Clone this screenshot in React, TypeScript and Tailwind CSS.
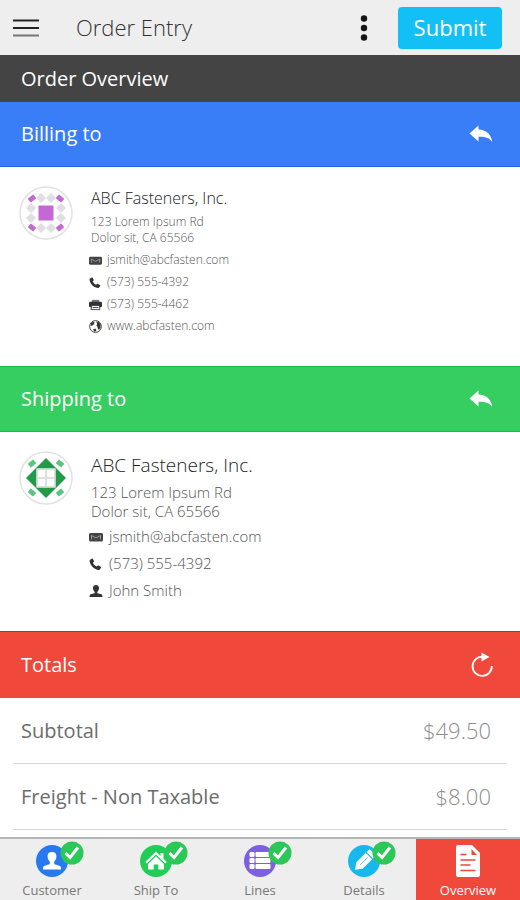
import React from 'react';

interface ContactLine {
  icon: React.ReactNode;
  text: string;
  href?: string;
}

interface ContactProps {
  avatar: React.ReactNode;
  name: string;
  address: string[];
  lines: ContactLine[];
  large?: boolean;
}

const MailIcon = () => (
  <svg viewBox="0 0 14 14" className="w-full h-full" fill="none">
    <rect x="0" y="3" width="14" height="8.5" rx="1.5" fill="#444" />
    <path d="M2.5 9.3V5.4L7 8l4.500-2.600v3.900" stroke="#a8a8a8" strokeWidth="0.9" />
  </svg>
);

const PhoneIcon = () => (
  <svg viewBox="0 0 14 14" className="w-full h-full" fill="#333">
    <path d="M1.200 2.800 3 1.600c.5-.2.8 0 1 .4l1 2c.2.500 0 .8-.3 1.100l-.8.6c.7 1.700 2 3 3.700 3.800l1-.8c.3-.3.7-.4 1.100-.2l2 1.200c.5.300.6.700.3 1.100l-1.200 1.600c-.4.500-.9.700-1.500.6C4.700 12.100 1.300 8.600.6 4.100c-.1-.6.1-1 .6-1.300z" />
  </svg>
);

const PrinterIcon = () => (
  <svg viewBox="0 0 14 14" className="w-full h-full">
    <path d="M3 2h8v2.500H3z" fill="#777" />
    <rect x="0" y="4" width="14" height="6" rx="1.500" fill="#333" />
    <path d="M3 8h8l.8 4.500H2.200z" fill="#fff" stroke="#333" strokeWidth="0.9" />
    <path d="M4 10.300h6" stroke="#333" strokeWidth="1" />
  </svg>
);

const GlobeIcon = () => (
  <svg viewBox="0 0 14 14" className="w-full h-full">
    <circle cx="7" cy="7" r="6.300" fill="#fff" stroke="#333" strokeWidth="1" />
    <path d="M2 3.500 4.500 1.800l1.500.8-.7 1.700-1.500 1.500-2 .5z" fill="#333" />
    <path d="M8 1.500c2 .2 3.500 1.300 4.400 3l-.1 4-1.600 2-1.300-1.300-.2-2L8 6.300l.7-2z" fill="#333" />
    <path d="M4.500 9.800l2.500-.3 1 1.300-1 1.700-1.500-.2z" fill="#333" />
  </svg>
);

const PersonIcon = () => (
  <svg viewBox="0 0 14 14" className="w-full h-full" fill="#333">
    <path d="M7 1c2 0 3.200 1.300 3 3.200C9.900 5.800 9 7.200 8.300 8v1.200c2 .4 4 .9 4.700 1.500.4.400.5 1.300.5 2.300H.5c0-1 .1-1.900.5-2.300.7-.6 2.700-1.100 4.700-1.500V8C5 7.200 4.100 5.800 4 4.200 3.800 2.300 5 1 7 1z" />
  </svg>
);

const ReplyIcon = () => (
  <svg viewBox="0 0 24 18" className="w-6 h-[18px]" fill="#fff">
    <path d="M.5 8.500 9.500.5v4c7.500.3 12.500 4.300 13.800 12.500-3.200-4.300-7.300-5.500-13.800-5.200v4.700z" />
  </svg>
);

const RefreshIcon = () => (
  <svg viewBox="0 0 24 26" className="w-6 h-[26px]" fill="none">
    <path d="M12.500 4.700A9.600 9.600 0 1 0 21.800 14" stroke="#fff" strokeWidth="1.900" />
    <path d="M11.500.5 19.500 5 11.500 9.500z" fill="#fff" />
  </svg>
);

// small slanted marks in the four corners of an avatar
const CornerMarks = ({ fill }: { fill: string }) => (
  <g fill={fill}>
    <rect x="9.500" y="10" width="7" height="5" rx="0.500" transform="rotate(-40 13 12.500)" />
    <rect x="37.500" y="10" width="7" height="5" rx="0.500" transform="rotate(40 41 12.500)" />
    <rect x="9.500" y="39" width="7" height="5" rx="0.500" transform="rotate(40 13 41.500)" />
    <rect x="37.500" y="39" width="7" height="5" rx="0.500" transform="rotate(-40 41 41.500)" />
  </g>
);

const dots = [[22, 12], [32, 12], [22, 42], [32, 42], [12, 22], [12, 32], [42, 22], [42, 32]];

const BillingAvatar = () => (
  <svg viewBox="0 0 54 54" className="w-[54px] h-[54px] mt-px shrink-0">
    <circle cx="27" cy="27" r="26" fill="#fff" stroke="#e2e2e2" strokeWidth="1.500" />
    <g fill="#e0e0e2">
      {dots.map(([x, y]) => (
        <path key={`${x}-${y}`} d={`M${x} ${y - 5}l5 5-5 5-5-5z`} />
      ))}
    </g>
    <rect x="19.500" y="19.500" width="15" height="15" fill="#c568d6" />
    <CornerMarks fill="#c568d6" />
  </svg>
);

const ShippingAvatar = () => (
  <svg viewBox="0 0 54 54" className="w-[54px] h-[54px] mt-px shrink-0">
    <circle cx="27" cy="27" r="26" fill="#fff" stroke="#e2e2e2" strokeWidth="1.500" />
    <g fill="#229a49">
      <path d="M27 7 37.500 17.500h-21z" />
      <path d="M27 47 37.500 36.500h-21z" />
      <path d="M7 27 17.500 16.500v21z" />
      <path d="M47 27 36.500 16.500v21z" />
    </g>
    <rect x="17.500" y="17.500" width="19" height="19" fill="#dedede" />
    <path d="M19 19h7v7h-7zM28 19h7v7h-7zM19 28h7v7h-7zM28 28h7v7h-7z" fill="#fff" />
    <CornerMarks fill="#58c77e" />
  </svg>
);

const CheckBadge = () => (
  <svg viewBox="0 0 24 24" className="absolute -top-1 left-6 w-6 h-6">
    <circle cx="12" cy="12" r="11.500" fill="#2bc857" />
    <path d="M5.500 12l4.500 4.500L18 6.500" stroke="#fff" strokeWidth="3" fill="none" />
  </svg>
);

const CustomerGlyph = () => (
  <path fill="#fff" d="M16 7c3 0 4.700 2 4.400 4.900-.2 2.200-1.200 3.600-2.200 4.700v2.600c3 .7 6 1.500 6.500 2.500.3.700.3 1.800.3 2.800H7c0-1 0-2.100.3-2.800.5-1 3.500-1.800 6.500-2.500v-2.600c-1-1.100-2-2.500-2.200-4.700C11.300 9 13 7 16 7z" />
);

const HomeGlyph = () => (
  <g fill="#fff">
    <path d="M16 6.500 20.500 11V8h3v5.800l3.300 3.200-1.500 1.500L16 9.500l-9.300 9L5.200 17z" />
    <path d="M16 11.300l8 7.600v5.600h-5.700v-5h-4.600v5H8v-5.600z" />
  </g>
);

const LinesGlyph = () => (
  <g fill="#fff">
    {[7, 13, 19].map((y) => (
      <g key={y}>
        <rect x="5.500" y={y} width="5" height="5" rx="1.200" />
        <rect x="11.500" y={y} width="15" height="5" rx="1.200" />
      </g>
    ))}
  </g>
);

const PencilGlyph = () => (
  <g transform="rotate(45 16 16)">
    <path fill="#fff" d="M12.500 3.500h7a1 1 0 0 1 1 1v3.300h-9V4.500a1 1 0 0 1 1-1zM11.500 9h9v13.500L16 28.500l-4.500-6z" />
    <path d="M16 11v10.500" stroke="#16b9ee" strokeWidth="0.700" />
  </g>
);

const DocumentIcon = () => (
  <svg viewBox="0 0 24 32" className="w-6 h-8">
    <path d="M2 0h14l8 8v22a2 2 0 0 1-2 2H2a2 2 0 0 1-2-2V2a2 2 0 0 1 2-2z" fill="#fff" />
    <path d="M15.500 4v6h5.500z" fill="#ef463a" />
    <path d="M4.500 9.500h6M4.500 15h15M4.500 20h10M4.500 25.500h15" stroke="#ef463a" strokeWidth="1.300" />
  </svg>
);

const tabs = [
  { label: 'Customer', color: '#2878f0', glyph: <CustomerGlyph /> },
  { label: 'Ship To', color: '#20cd55', glyph: <HomeGlyph /> },
  { label: 'Lines', color: '#7d60e0', glyph: <LinesGlyph /> },
  { label: 'Details', color: '#16b9ee', glyph: <PencilGlyph /> },
];

const totals = [
  { label: 'Subtotal', amount: '$49.50' },
  { label: 'Freight - Non Taxable', amount: '$8.00' },
];

const Contact: React.FC<ContactProps> = ({ avatar, name, address, lines, large }) => (
  <div className={`flex gap-[18px] pl-[19px] pt-[18px] ${large ? 'pb-[27px]' : 'pb-[29px]'}`}>
    {avatar}
    <div className="min-w-0 font-light text-[#555]">
      <h3 className={`text-[#222] ${large ? 'text-[19px] leading-[30px]' : 'text-[16px] leading-[26px]'}`}>{name}</h3>
      <address className={`mt-[3px] not-italic ${large ? 'text-[15px] leading-[19px]' : 'text-[12px] leading-4'}`}>
        {address.map((row) => (
          <div key={row}>{row}</div>
        ))}
      </address>
      <ul className={`-ml-0.5 ${large ? 'mt-0.5 text-[15px] leading-[27px]' : 'mt-[3px] text-[12px] leading-[22px]'}`}>
        {lines.map((line) => (
          <li key={line.text} className={`flex items-center ${large ? 'gap-1.5' : 'gap-[5px]'}`}>
            <span className={`shrink-0 ${large ? 'w-[14px] h-[14px]' : 'w-[13px] h-[13px]'}`}>{line.icon}</span>
            {line.href ? <a href={line.href}>{line.text}</a> : <span>{line.text}</span>}
          </li>
        ))}
      </ul>
    </div>
  </div>
);

const App: React.FC = () => {
  return (
    <div className="flex flex-col h-screen overflow-hidden bg-white font-['Open_Sans',sans-serif]">
      <header className="flex items-center h-[55px] shrink-0 pl-[13px] pr-[18px] bg-[#eeeeee]">
        <button type="button" aria-label="Menu">
          <svg viewBox="0 0 26 20" className="w-[26px] h-5">
            <path d="M0 2.500h26M0 10h26" stroke="#222" strokeWidth="2" />
            <path d="M0 17.500h26" stroke="#777" strokeWidth="2" />
          </svg>
        </button>
        <h1 className="ml-[37px] text-[22px] font-light text-[#333]">Order Entry</h1>
        <button type="button" aria-label="More options" className="ml-auto mr-[30px]">
          <svg viewBox="0 0 8 28" className="w-2 h-7" fill="#151515">
            <circle cx="4" cy="4.500" r="3.200" />
            <circle cx="4" cy="14" r="3.200" />
            <circle cx="4" cy="23.500" r="3.200" />
          </svg>
        </button>
        <button type="button" className="w-[104px] h-[42px] rounded bg-[#12c0f5] text-[22px] text-white">
          Submit
        </button>
      </header>

      <main className="flex-1 min-h-0 overflow-hidden">
        <h2 className="flex items-center h-[47px] pl-[21px] bg-[#444] text-[20px] text-white">Order Overview</h2>

        <section>
          <div className="flex items-center justify-between h-[65px] pl-[21px] pr-[27px] border-b border-[#2260d8] bg-[#397ef7] text-white">
            <h2 className="text-[20px]">Billing to</h2>
            <button type="button" aria-label="Change billing contact">
              <ReplyIcon />
            </button>
          </div>
          <Contact
            avatar={<BillingAvatar />}
            name="ABC Fasteners, Inc."
            address={['123 Lorem Ipsum Rd', 'Dolor sit, CA 65566']}
            lines={[
              { icon: <MailIcon />, text: 'jsmith@abcfasten.com', href: '#mail' },
              { icon: <PhoneIcon />, text: '(573) 555-4392', href: '#phone' },
              { icon: <PrinterIcon />, text: '(573) 555-4462' },
              { icon: <GlobeIcon />, text: 'www.abcfasten.com', href: '#web' },
            ]}
          />
        </section>

        <section>
          <div className="flex items-center justify-between h-[66px] pl-[21px] pr-[27px] border-y border-[#16bd4c] bg-[#36ce60] text-white">
            <h2 className="text-[20px]">Shipping to</h2>
            <button type="button" aria-label="Change shipping contact">
              <ReplyIcon />
            </button>
          </div>
          <Contact
            large
            avatar={<ShippingAvatar />}
            name="ABC Fasteners, Inc."
            address={['123 Lorem Ipsum Rd', 'Dolor sit, CA 65566']}
            lines={[
              { icon: <MailIcon />, text: 'jsmith@abcfasten.com', href: '#mail' },
              { icon: <PhoneIcon />, text: '(573) 555-4392', href: '#phone' },
              { icon: <PersonIcon />, text: 'John Smith' },
            ]}
          />
        </section>

        <section>
          <div className="flex items-center justify-between h-[67px] pl-[21px] pr-[26px] border-t border-[#e02010] bg-[#f0483b] text-white">
            <h2 className="text-[20px]">Totals</h2>
            <button type="button" aria-label="Refresh totals">
              <RefreshIcon />
            </button>
          </div>
          <dl className="px-[13px]">
            {totals.map((row) => (
              <div key={row.label} className="flex items-center justify-between h-[66px] pl-2 pr-4 border-b border-[#d8d8d8]">
                <dt className="text-[20px] text-[#6c6c6c]">{row.label}</dt>
                <dd className="text-[22px] font-light text-[#8c8c8c]">{row.amount}</dd>
              </div>
            ))}
          </dl>
        </section>
      </main>

      <nav className="grid grid-cols-5 h-[63px] shrink-0 border-t-2 border-[#b5b5b5] bg-[#eeeeee] text-[13px] leading-4 text-[#777]">
        {tabs.map((tab) => (
          <a key={tab.label} href="#tab" className="flex flex-col items-center pt-[6px]">
            <span className="relative">
              <svg viewBox="0 0 32 32" className="w-8 h-8">
                <circle cx="16" cy="16" r="16" fill={tab.color} />
                {tab.glyph}
              </svg>
              <CheckBadge />
            </span>
            <span className="mt-[5px]">{tab.label}</span>
          </a>
        ))}
        <a href="#tab" aria-current="page" className="flex flex-col items-center pt-[6px] bg-[#f0483b] text-white">
          <DocumentIcon />
          <span className="mt-[5px]">Overview</span>
        </a>
      </nav>
    </div>
  );
};

export default App;
